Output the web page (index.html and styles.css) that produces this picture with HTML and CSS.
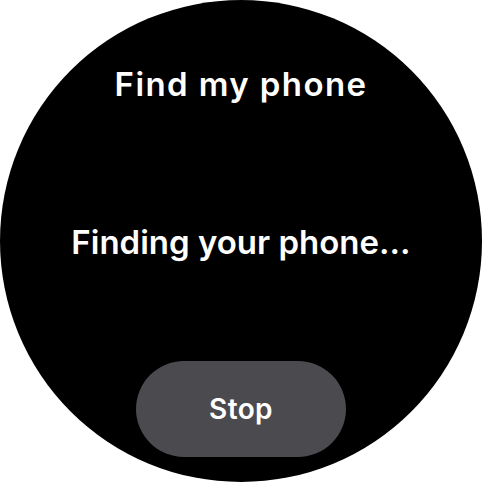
FILE: index.html
```html
<!DOCTYPE html>
<html>
<head>
<meta charset="utf-8">
<link rel="stylesheet" href="styles.css">
</head>
<body>
<div class="watch">
  <div class="title">Find my phone</div>
  <div class="status">Finding your phone...</div>
  <button class="stop">Stop</button>
</div>
</body>
</html>
```
FILE: styles.css
```css
html, body {
  margin: 0;
  padding: 0;
  background: #ffffff;
}
.watch {
  width: 482px;
  height: 482px;
  border-radius: 50%;
  background: #000000;
  display: flex;
  flex-direction: column;
  align-items: center;
  font-family: Inter, "Noto Sans", sans-serif;
  color: #ffffff;
  box-sizing: border-box;
  padding-top: 64px;
}
.title {
  font-size: 33px;
  font-weight: 600;
  line-height: 40px;
  letter-spacing: 1.4px;
}
.status {
  font-size: 33px;
  font-weight: 600;
  line-height: 40px;
  margin-top: 118px;
}
.stop {
  margin-top: 99px;
  width: 210px;
  height: 96px;
  border: none;
  border-radius: 48px;
  background: #4b4a4f;
  color: #ffffff;
  font-family: Inter, "Noto Sans", sans-serif;
  font-size: 28px;
  font-weight: 600;
  letter-spacing: 0.4px;
  padding: 0;
}
```
